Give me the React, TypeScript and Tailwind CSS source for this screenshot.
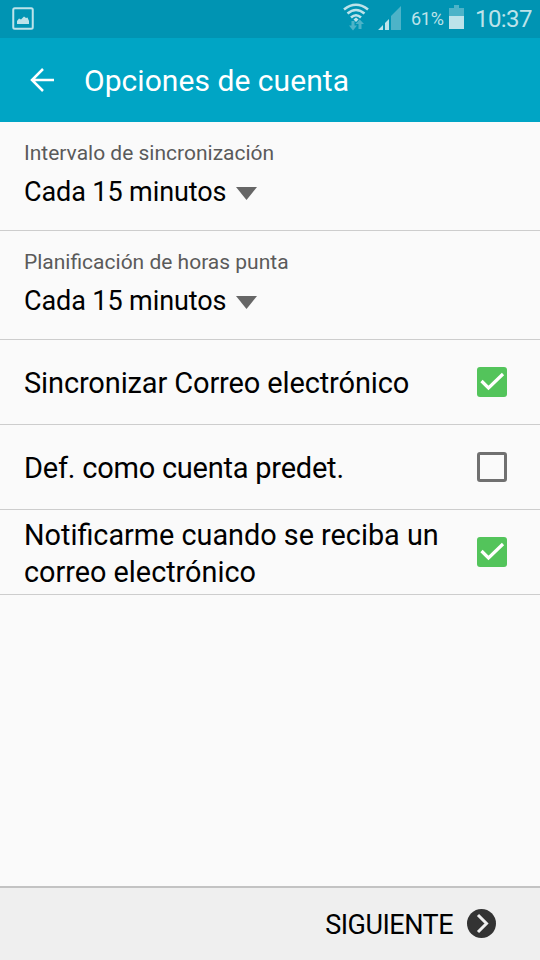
import { useState } from "react";

const intervals = [
  { label: "Intervalo de sincronización", value: "Cada 15 minutos" },
  { label: "Planificación de horas punta", value: "Cada 15 minutos" },
];

const options = [
  { id: "sync", label: "Sincronizar Correo electrónico", text: "text-[29px] tracking-[-0.13px]" },
  { id: "default", label: "Def. como cuenta predet.", text: "text-[29px] tracking-[-0.23px]" },
  { id: "notify", label: "Notificarme cuando se reciba un correo electrónico", text: "text-[28.8px]" },
];

function StatusBar() {
  return (
    <div className="flex h-[38px] shrink-0 items-center bg-[#0094b3] pl-3 pr-2 text-[#bde3ea]">
      <svg width="22" height="23" viewBox="0 0 22 23" className="-mt-0.5">
        <rect x="1.25" y="1.25" width="19.5" height="20.5" rx="1.5" fill="none" stroke="currentColor" strokeWidth="2" />
        <path d="M5 17v-3l2-2.500 2 1 3-3 2 1.500 1.500-.5L17 14v3z" fill="currentColor" />
      </svg>
      <div className="flex-1" />
      <svg width="26" height="28" viewBox="0 0 26 28" className="mr-2 -mt-1">
        <path d="M1 6.500Q13-3 25 6.500M4.500 10.500Q13 3.500 21.500 10.500M8 14.500Q13 10 18 14.500" fill="none" stroke="currentColor" strokeWidth="2.600" />
        <path d="m10.500 16.500 2.500-2 2.500 2-2.500 2.500z" fill="currentColor" />
        <path d="M6 22.500h2.500V18h3v4.500H14l-4 5zM12.500 21l4.250-4.500L21 21h-2.500v5h-3v-5z" fill="#4db3c8" />
      </svg>
      <svg width="24" height="24" viewBox="0 0 24 24" className="mr-[9px] -mt-0.5 ml-px">
        <path d="M13 10 23 0v24H13z" fill="#4db3c8" />
        <path d="m0 24 5-5v5zM7 17l4-4v11H7z" fill="currentColor" />
      </svg>
      <span className="-mt-0.5 mr-1 w-[34px] whitespace-nowrap text-[18px] tracking-[-0.3px]">61%</span>
      <svg width="15" height="24" viewBox="0 0 15 24" className="mr-[11px] -mt-1">
        <path d="M5 0h5v3h5v8H0V3h5z" fill="#4db3c8" />
        <path d="M0 11h15v13H0z" fill="currentColor" />
      </svg>
      <span className="w-[57px] whitespace-nowrap text-[24px] tracking-[-0.6px]">10:37</span>
    </div>
  );
}

export default function App() {
  const [checked, setChecked] = useState<Record<string, boolean>>({ sync: true, default: false, notify: true });

  return (
    <div className="flex h-[960px] w-[540px] flex-col bg-[#fafafa] font-['Roboto',sans-serif] text-black">
      <StatusBar />
      <header className="flex h-[84px] shrink-0 items-center bg-[#00a5c5] pl-[30px] text-white">
        <svg width="25" height="24" viewBox="0 0 25 24" fill="none" stroke="currentColor" strokeWidth="2.500">
          <path d="M24 12H2M13 1 2 12l11 11" />
        </svg>
        <h1 className="ml-[29px] text-[30px] tracking-[0.05px]">Opciones de cuenta</h1>
      </header>
      <main className="flex-1">
        {intervals.map((item) => (
          <div key={item.label} className="h-[109px] border-b border-[#cdcdcd] px-6 pt-[17px]">
            <div className="text-[21px] leading-7 text-[#5a5a5a]">{item.label}</div>
            <button className="mt-[7px] flex items-center text-[27px] leading-9 tracking-[-0.1px]">
              {item.value}
              <svg width="21" height="13" viewBox="0 0 21 13" className="ml-2.5 mt-0.5">
                <path d="M0 0h21L10.500 13z" fill="#666" />
              </svg>
            </button>
          </div>
        ))}
        {options.map(({ id, label, text }) => (
          <button
            key={id}
            onClick={() => setChecked({ ...checked, [id]: !checked[id] })}
            className="flex h-[85px] w-full items-center justify-between border-b border-[#cdcdcd] pl-6 pr-[33px] text-left"
          >
            <span className={`w-[425px] pt-[3px] leading-[37px] ${text}`}>{label}</span>
            {checked[id] ? (
              <svg width="30" height="30" viewBox="0 0 30 30">
                <rect width="30" height="30" rx="3" fill="#53c45b" />
                <path d="m4.500 14 7 7L26 7" fill="none" stroke="#fff" strokeWidth="3.200" />
              </svg>
            ) : (
              <span className="size-[30px] rounded-[3px] border-[3px] border-[#707070]" />
            )}
          </button>
        ))}
      </main>
      <footer className="flex h-[74px] shrink-0 items-center justify-end border-t-2 border-[#c3c3c3] bg-[#efefef] pr-11">
        <span className="mr-3.5 mt-[3px] text-[27px] tracking-[-0.5px]">SIGUIENTE</span>
        <svg width="29" height="29" viewBox="0 0 29 29" className="-mt-px">
          <circle cx="14.5" cy="14.5" r="14.5" fill="#333" />
          <path d="m11 6 8.500 8.500L11 23" fill="none" stroke="#efefef" strokeWidth="3" />
        </svg>
      </footer>
    </div>
  );
}
